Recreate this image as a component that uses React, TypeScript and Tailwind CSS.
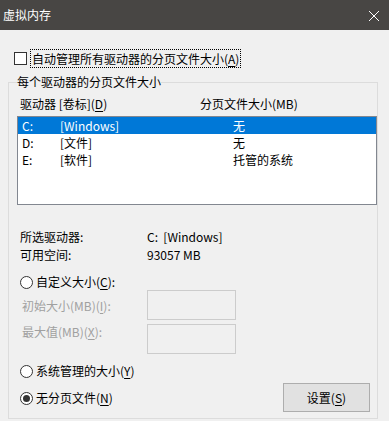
import React from "react";

const U = ({ c }: { c: string }) => <span className="underline underline-offset-2">{c}</span>;

const Radio = ({ checked }: { checked?: boolean }) => (
  <span className="w-[13px] h-[13px] rounded-full border border-[#333333] bg-white flex items-center justify-center shrink-0">
    {checked && <span className="w-[7px] h-[7px] rounded-full bg-[#333333]" />}
  </span>
);

export default function App() {
  const rows = [
    { d: "C:", l: "[Windows]", s: "无", sel: true },
    { d: "D:", l: "[文件]", s: "无" },
    { d: "E:", l: "[软件]", s: "托管的系统" },
  ];
  return (
    <div
      className="w-[389px] h-[421px] overflow-hidden bg-[#f0f0f0] text-[12px] leading-[16px] text-black"
      style={{ fontFamily: '"Noto Sans CJK SC", "Noto Sans", sans-serif' }}
    >
      {/* title bar */}
      <div className="h-[30px] bg-[#484644] flex items-center justify-between pl-[3px] pr-[9px]">
        <span className="text-white">虚拟内存</span>
        <svg width="12" height="12" viewBox="0 0 12 12" className="mt-[1px]">
          <path d="M1 1 L11 11 M11 1 L1 11" stroke="#ffffff" strokeWidth="1" />
        </svg>
      </div>

      {/* checkbox */}
      <div className="mt-[19px] h-[19px] flex items-center pl-[14px]">
        <span className="w-[13px] h-[13px] border border-[#333333] bg-white shrink-0" />
        <span className="ml-[3px] px-[1px] h-[19px] flex items-center border border-dotted border-black">
          自动管理所有驱动器的分页文件大小(<U c="A" />)
        </span>
      </div>

      {/* group box */}
      <fieldset className="mt-[6px] ml-[8px] w-[369px] border border-[#dcdcdc] pl-[8px] pb-[6px]">
        <legend className="px-0 leading-[16px]">每个驱动器的分页文件大小</legend>

        <div className="mt-[6px] h-[16px] flex ml-[3px]">
          <span className="w-[180px]">
            驱动器 [卷标](<U c="D" />)
          </span>
          <span>分页文件大小(MB)</span>
        </div>

        <div className="mt-[4px] w-[360px] h-[89px] border border-[#828790] bg-white">
          {rows.map((r) => (
            <div
              key={r.d}
              className={`h-[17px] flex items-center pl-[4px] ${r.sel ? "bg-[#0078d7] text-white" : ""}`}
            >
              <span className="w-[38px]">{r.d}</span>
              <span className="w-[173px]">{r.l}</span>
              <span>{r.s}</span>
            </div>
          ))}
        </div>

        <div className="mt-[23px] ml-[3px] h-[18px] flex items-center">
          <span className="w-[127px]">所选驱动器:</span>
          <span>C:&nbsp;&nbsp;[Windows]</span>
        </div>
        <div className="ml-[3px] h-[18px] flex items-center">
          <span className="w-[127px]">可用空间:</span>
          <span>93057 MB</span>
        </div>

        <div className="mt-[10px] ml-[3px] h-[16px] flex items-center gap-[3px]">
          <Radio />
          <span>
            自定义大小(<U c="C" />):
          </span>
        </div>

        <div className="ml-[5px] flex items-start text-[#a0a0a0]">
          <span className="w-[125px] mt-[8px]">
            初始大小(MB)(<U c="I" />):
          </span>
          <span className="w-[89px] h-[30px] border border-[#cccccc] bg-[#f0f0f0]" />
        </div>
        <div className="mt-[4px] ml-[5px] flex items-start text-[#a0a0a0]">
          <span className="w-[125px] mt-[0px]">
            最大值(MB)(<U c="X" />):
          </span>
          <span className="w-[89px] h-[30px] border border-[#cccccc] bg-[#f0f0f0]" />
        </div>

        <div className="mt-[9px] flex items-start justify-between">
          <div className="ml-[3px] flex flex-col">
            <div className="h-[16px] flex items-center gap-[3px]">
              <Radio />
              <span>
                系统管理的大小(<U c="Y" />)
              </span>
            </div>
            <div className="mt-[11px] h-[16px] flex items-center gap-[3px]">
              <Radio checked />
              <span>
                无分页文件(<U c="N" />)
              </span>
            </div>
          </div>
          <button className="mt-[20px] mr-[7px] w-[87px] h-[29px] bg-[#e1e1e1] border border-[#adadad] flex items-center justify-center">
            设置(<U c="S" />)
          </button>
        </div>
      </fieldset>
    </div>
  );
}
